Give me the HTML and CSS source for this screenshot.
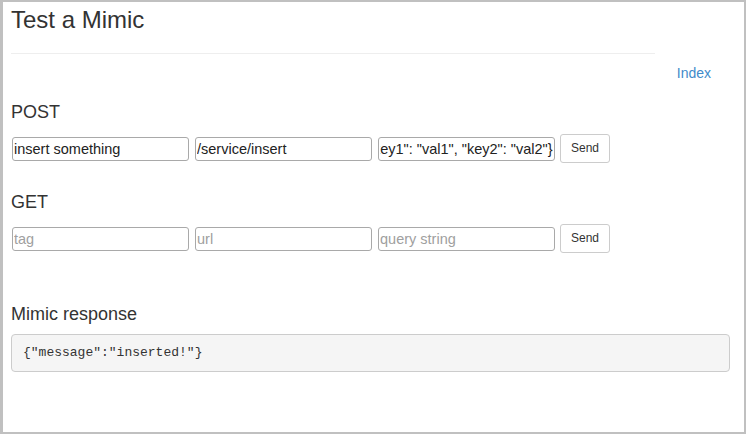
FILE: index.html
```html
<!DOCTYPE html>
<html>
<head>
<meta charset="utf-8">
<title>Test a Mimic</title>
<link rel="stylesheet" href="styles.css">
</head>
<body>
<div class="frame">
  <div class="container">
    <header class="page-head">
      <h1 class="title">Test a Mimic</h1>
      <hr class="rule">
    </header>
    <nav class="nav-row"><a class="nav-link" href="#">Index</a></nav>

    <section class="block block-post">
      <h4 class="block-title">POST</h4>
      <form class="form-row">
        <input class="field" type="text" value="insert something" placeholder="tag">
        <input class="field" type="text" value="/service/insert" placeholder="url">
        <input class="field field-scroll" type="text" value='{"key1": "val1", "key2": "val2"}' placeholder="body">
        <button class="btn" type="button">Send</button>
      </form>
    </section>

    <section class="block block-get">
      <h4 class="block-title">GET</h4>
      <form class="form-row">
        <input class="field" type="text" placeholder="tag">
        <input class="field" type="text" placeholder="url">
        <input class="field" type="text" placeholder="query string">
        <button class="btn" type="button">Send</button>
      </form>
    </section>

    <section class="block block-response">
      <h4 class="block-title">Mimic response</h4>
      <pre class="response">{"message":"inserted!"}</pre>
    </section>
  </div>
</div>
<script src="script.js"></script>
</body>
</html>
```

FILE: styles.css
```css
* { box-sizing: border-box; }
html, body { margin: 0; padding: 0; }
body {
  font-family: "Liberation Sans", Arial, Helvetica, sans-serif;
  color: #333;
  background: #c0c0c0;
}
.frame {
  width: 746px;
  height: 434px;
  border-style: solid;
  border-color: #c0c0c0;
  border-width: 2px 2px 2px 3px;
  background: #fff;
  overflow: hidden;
}
.container {
  padding: 0 14px 0 8px;
}
.page-head {
  width: 644px;
}
.title {
  margin: 5px 0 0 0;
  font-size: 24px;
  line-height: 26px;
  font-weight: 400;
  color: #333;
}
.rule {
  margin: 20px 0 0 0;
  border: 0;
  border-top: 1px solid #eee;
  height: 0;
}
.nav-row {
  display: flex;
  justify-content: flex-end;
  margin-top: 9px;
  padding-right: 19px;
  line-height: 20px;
}
.nav-link {
  font-size: 14px;
  color: #428bca;
  text-decoration: none;
}
.block-title {
  margin: 0 0 12px 0;
  font-size: 18px;
  line-height: 20px;
  font-weight: 400;
  color: #333;
}
.block-post { margin-top: 19px; }
.block-get { margin-top: 29px; }
.block-response { margin-top: 51px; }
.block-response .block-title { margin-bottom: 10px; }
.form-row {
  display: flex;
  align-items: center;
  gap: 6px;
  margin: 0;
  padding-left: 1px;
}
.field {
  width: 177px;
  height: 24px;
  padding: 1px 1px;
  border: 1px solid #a9a9a9;
  border-radius: 3px;
  font-family: "Liberation Sans", Arial, sans-serif;
  font-size: 14.5px;
  color: #222;
  background: #fff;
  outline: none;
}
.field::placeholder { color: #a0a0a0; }
.btn {
  height: 29px;
  margin-left: -1px;
  padding: 5px 10px;
  border: 1px solid #ccc;
  border-radius: 3px;
  background: #fff;
  color: #333;
  font-family: "Liberation Sans", Arial, sans-serif;
  font-size: 12px;
  line-height: 17px;
}
.response {
  margin: 0;
  padding: 9px 10px 9px 11px;
  border: 1px solid #ccc;
  border-radius: 4px;
  background: #f5f5f5;
  font-family: "Liberation Mono", "Courier New", monospace;
  font-size: 13px;
  line-height: 18px;
  color: #333;
}
```

FILE: script.js
```js
document.querySelectorAll('.field-scroll').forEach(function (el) {
  el.scrollLeft = el.scrollWidth;
});
```
